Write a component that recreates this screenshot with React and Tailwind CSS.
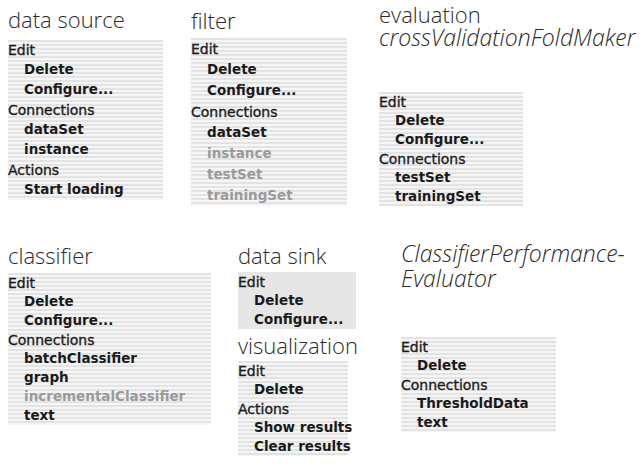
import React from "react";

const stripes =
  "bg-[repeating-linear-gradient(to_bottom,#e3e3e3_0px,#e3e3e3_2px,#f6f6f6_2px,#f6f6f6_4px)]";

function Menu({ rows, width, row, solid }) {
  return (
    <div
      className={`${width} ${solid ? "bg-[#e6e6e6]" : stripes} font-['DejaVu_Sans',sans-serif] whitespace-nowrap`}
    >
      {rows.map((r, i) => (
        <div
          key={i}
          className={`${row} flex items-center leading-none ${
            r.head
              ? "text-[14px] text-[#1c1c1c] [-webkit-text-stroke:0.35px_#1c1c1c]"
              : `pl-4 text-[13.5px] font-bold ${r.off ? "text-[#9a9a9a]" : "text-[#1a1a1a]"}`
          }`}
        >
          {r.t}
        </div>
      ))}
    </div>
  );
}

function Title({ children, italic, lead = "leading-[26px]" }) {
  return (
    <div
      className={`font-['Open_Sans',sans-serif] font-light text-[#2a2a2a] whitespace-nowrap ${lead} ${
        italic ? "italic text-[23px]" : "text-[22px]"
      }`}
    >
      {children}
    </div>
  );
}

const h = (t) => ({ t, head: true });
const it = (t, off) => ({ t, off });

export default function App() {
  return (
    <div className="w-[640px] h-[471px] bg-white overflow-hidden">
      <div className="flex pl-2 h-[241px]">
        <div className="w-[183px] pt-[6px]">
          <Title>data source</Title>
          <div className="mt-[8px]">
            <Menu
              width="w-[155px]"
              row="h-[20px]"
              rows={[
                h("Edit"),
                it("Delete"),
                it("Configure..."),
                h("Connections"),
                it("dataSet"),
                it("instance"),
                h("Actions"),
                it("Start loading"),
              ]}
            />
          </div>
        </div>
        <div className="w-[188px] pt-[7px]">
          <Title>filter</Title>
          <div className="mt-[5px]">
            <Menu
              width="w-[156px]"
              row="h-[21px]"
              rows={[
                h("Edit"),
                it("Delete"),
                it("Configure..."),
                h("Connections"),
                it("dataSet"),
                it("instance", true),
                it("testSet", true),
                it("trainingSet", true),
              ]}
            />
          </div>
        </div>
        <div className="pt-[3px]">
          <Title lead="leading-[23px]">evaluation</Title>
          <Title lead="leading-[23px]" italic>
            crossValidationFoldMaker
          </Title>
          <div className="mt-[43px]">
            <Menu
              width="w-[144px]"
              row="h-[19px]"
              rows={[
                h("Edit"),
                it("Delete"),
                it("Configure..."),
                h("Connections"),
                it("testSet"),
                it("trainingSet"),
              ]}
            />
          </div>
        </div>
      </div>
      <div className="flex pl-2">
        <div className="w-[230px] pt-[1px]">
          <Title>classifier</Title>
          <div className="mt-[5px]">
            <Menu
              width="w-[203px]"
              row="h-[19px]"
              rows={[
                h("Edit"),
                it("Delete"),
                it("Configure..."),
                h("Connections"),
                it("batchClassifier"),
                it("graph"),
                it("incrementalClassifier", true),
                it("text"),
              ]}
            />
          </div>
        </div>
        <div className="w-[163px] pt-[1px]">
          <Title>data sink</Title>
          <div className="mt-[4px]">
            <Menu
              solid
              width="w-[118px]"
              row="h-[19px]"
              rows={[h("Edit"), it("Delete"), it("Configure...")]}
            />
          </div>
          <div className="mt-[3px]">
            <Title>visualization</Title>
          </div>
          <div className="mt-[3px]">
            <Menu
              width="w-[110px]"
              row="h-[19px]"
              rows={[
                h("Edit"),
                it("Delete"),
                h("Actions"),
                it("Show results"),
                it("Clear results"),
              ]}
            />
          </div>
        </div>
        <div>
          <Title lead="leading-[25px]" italic>
            ClassifierPerformance-
          </Title>
          <Title lead="leading-[25px]" italic>
            Evaluator
          </Title>
          <div className="mt-[46px]">
            <Menu
              width="w-[155px]"
              row="h-[19px]"
              rows={[
                h("Edit"),
                it("Delete"),
                h("Connections"),
                it("ThresholdData"),
                it("text"),
              ]}
            />
          </div>
        </div>
      </div>
    </div>
  );
}
